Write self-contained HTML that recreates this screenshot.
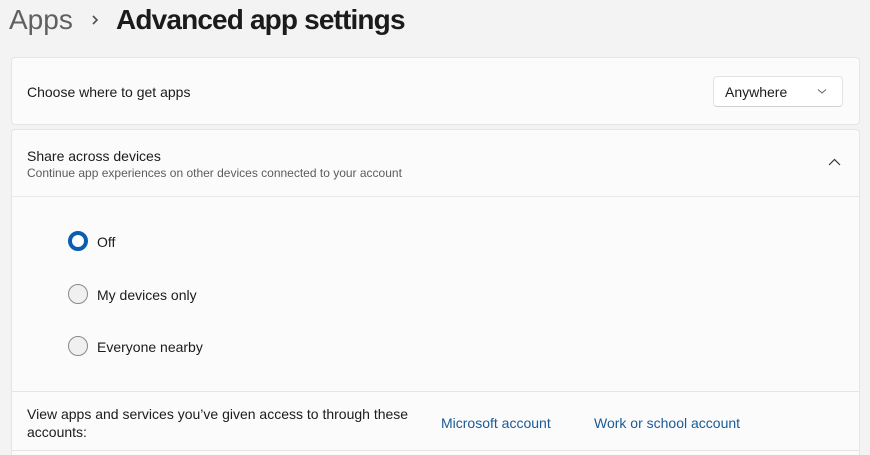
<!DOCTYPE html>
<html style="overflow:hidden;height:455px"><head><style>
body{margin:0;width:870px;height:455px;background:#f3f3f3;font-family:"Liberation Sans",sans-serif;position:relative;overflow:hidden;color:#1b1b1b}
.a{position:absolute}
.card{position:absolute;left:11px;width:847px;background:#fbfbfb;border:1px solid #e5e5e5;border-radius:4px}
.t{font-size:14px}
.radio{position:absolute;left:68px;width:18px;height:18px;border-radius:50%;border:1px solid #8a8a8a;background:#f0f0f0}
.lbl{position:absolute;left:97px;font-size:14px}
.link{position:absolute;font-size:14px;color:#1a5a96}
</style></head><body>
<div class="a" style="left:9px;top:4px;font-size:28px;color:#606060">Apps</div>
<svg class="a" style="left:90px;top:14px" width="10" height="12"><path d="M3 2 L7 6 L3 10" fill="none" stroke="#505050" stroke-width="1.6"/></svg>
<div class="a" style="left:116px;top:4px;font-size:28px;font-weight:bold;color:#1b1b1b;letter-spacing:-0.85px">Advanced app settings</div>

<div class="card" style="top:57px;height:66px"></div>
<div class="a t" style="left:27px;top:84px">Choose where to get apps</div>
<div class="a" style="left:713px;top:76px;width:128px;height:29px;background:#fff;border:1px solid #e3e3e3;border-bottom-color:#d0d0d0;border-radius:4px"></div>
<div class="a t" style="left:725px;top:84px">Anywhere</div>
<svg class="a" style="left:817px;top:88px" width="10" height="7"><path d="M1 1.5 L5 5 L9 1.5" fill="none" stroke="#606060" stroke-width="1"/></svg>

<div class="card" style="top:129px;height:340px"></div>
<div class="a t" style="left:27px;top:148px">Share across devices</div>
<div class="a" style="left:27px;top:166px;font-size:12px;color:#5c5c5c">Continue app experiences on other devices connected to your account</div>
<svg class="a" style="left:828px;top:158px" width="13" height="8"><path d="M1 7 L6.5 1.5 L12 7" fill="none" stroke="#333" stroke-width="1.2"/></svg>
<div class="a" style="left:12px;top:196px;width:847px;height:1px;background:#e8e8e8"></div>

<div class="radio" style="top:231px;width:12px;height:12px;border:4px solid #0a5eb0;background:#fff"></div>
<div class="lbl" style="top:234px">Off</div>
<div class="radio" style="top:284px"></div>
<div class="lbl" style="top:287px">My devices only</div>
<div class="radio" style="top:336px"></div>
<div class="lbl" style="top:339px">Everyone nearby</div>

<div class="a" style="left:12px;top:391px;width:847px;height:1px;background:#e5e5e5"></div>
<div class="a t" style="left:27px;top:405px;line-height:18px;width:400px">View apps and services you’ve given access to through these accounts:</div>
<div class="link" style="left:441px;top:415px">Microsoft account</div>
<div class="link" style="left:594px;top:415px">Work or school account</div>
<div class="a" style="left:12px;top:450px;width:847px;height:1px;background:#e5e5e5"></div>
</body></html>
